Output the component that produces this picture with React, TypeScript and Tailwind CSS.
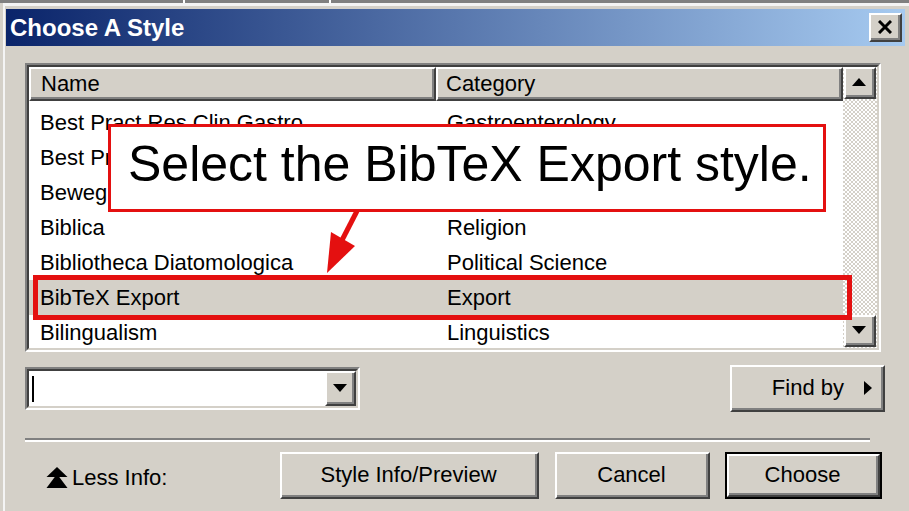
import React from "react";

const font = { fontFamily: '"Liberation Sans", Arial, sans-serif' };

function Bevel({ className = "", children }: { className?: string; children?: React.ReactNode }) {
  return (
    <div className={"border-t-2 border-l-2 border-t-white border-l-white border-b-2 border-r-2 border-b-[#404040] border-r-[#404040] " + className}>
      <div className="w-full h-full border-b-2 border-r-2 border-b-[#808080] border-r-[#808080] flex items-center justify-center">
        {children}
      </div>
    </div>
  );
}

function Sunken({ className = "", children }: { className?: string; children?: React.ReactNode }) {
  return (
    <div className={"border-t-2 border-l-2 border-t-[#808080] border-l-[#808080] border-b-2 border-r-2 border-b-white border-r-white " + className}>
      <div className="w-full h-full border-t-2 border-l-2 border-t-[#404040] border-l-[#404040] border-b-2 border-r-2 border-b-[#d4d0c8] border-r-[#d4d0c8] flex">
        {children}
      </div>
    </div>
  );
}

const rows: [string, string][] = [
  ["Best Pract Res Clin Gastro", "Gastroenterology"],
  ["Best Pract Res Clin Haem", "Hematology"],
  ["Bewegungstherapie", "Medicine"],
  ["Biblica", "Religion"],
  ["Bibliotheca Diatomologica", "Political Science"],
  ["BibTeX Export", "Export"],
  ["Bilingualism", "Linguistics"],
];

function Tri({ dir }: { dir: "up" | "down" | "right" }) {
  if (dir === "up")
    return (
      <svg width="14" height="8" viewBox="0 0 14 8"><polygon points="7,0 14,8 0,8" fill="#000" /></svg>
    );
  if (dir === "down")
    return (
      <svg width="14" height="8" viewBox="0 0 14 8"><polygon points="0,0 14,0 7,8" fill="#000" /></svg>
    );
  return (
    <svg width="8" height="14" viewBox="0 0 8 14"><polygon points="0,0 8,7 0,14" fill="#000" /></svg>
  );
}

export default function App() {
  return (
    <div className="w-[909px] h-[511px] bg-[#d4d0c8] flex flex-col overflow-hidden relative text-black" style={font}>
      {/* top strip */}
      <div className="h-[3px] flex bg-[#808080] shrink-0">
        <div className="w-[183px]" />
        <div className="w-[2px] bg-white" />
        <div className="w-[144px]" />
        <div className="w-[2px] bg-white" />
      </div>
      <div className="flex-1 ml-[3px] border-t-[3px] border-l-2 border-[#f4f4f4] border-r-0 border-b-0 flex flex-col">
        <div className="pt-[3px] pl-[1px] pr-[4px]">
          {/* title bar */}
          <div className="h-[37px] flex items-center justify-between bg-[linear-gradient(to_right,#0a246a,#a6caf0)] pl-[4px] pr-[3px]">
            <span className="text-white font-bold text-[24px] tracking-[0px]">Choose A Style</span>
            <Bevel className="w-[33px] h-[29px] bg-[#d4d0c8]">
              <svg width="14" height="14" viewBox="0 0 14 14">
                <path d="M1 1 L13 13 M13 1 L1 13" stroke="#000" strokeWidth="3" />
              </svg>
            </Bevel>
          </div>
        </div>
        <div className="pl-[20px] pt-[17px] flex flex-col">
          {/* list box */}
          <Sunken className="w-[856px] h-[289px]">
            <div className="flex-1 flex flex-col bg-white overflow-hidden">
              <div className="h-[34px] flex shrink-0">
                <Bevel className="w-[407px] h-full bg-[#d4d0c8]">
                  <div className="flex-1 pl-[10px] text-[22px]">Name</div>
                </Bevel>
                <Bevel className="w-[407px] h-full bg-[#d4d0c8]">
                  <div className="flex-1 pl-[8px] text-[22px]">Category</div>
                </Bevel>
              </div>
              <div className="flex flex-col pt-[4px]">
                {rows.map(([n, c], i) => (
                  <div key={n} className={"h-[35px] flex items-center text-[22px] shrink-0 " + (i === 5 ? "bg-[#d4d0c8]" : "")}>
                    <div className="w-[407px] pl-[11px] whitespace-nowrap overflow-hidden">{n}</div>
                    <div className="w-[407px] pl-[11px] whitespace-nowrap">{c}</div>
                  </div>
                ))}
              </div>
            </div>
            <div className="w-[34px] flex flex-col px-[1px] pb-[1px] bg-[repeating-conic-gradient(#d4d0c8_0%_25%,#ffffff_0%_50%)] [background-size:4px_4px]">
              <Bevel className="w-full h-[32px] bg-[#d4d0c8]"><Tri dir="up" /></Bevel>
              <div className="flex-1" />
              <Bevel className="w-full h-[32px] bg-[#d4d0c8]"><Tri dir="down" /></Bevel>
            </div>
          </Sunken>

          {/* combo + find by */}
          <div className="flex items-start mt-[13px]">
            <Sunken className="w-[335px] h-[43px] mt-[2px]">
              <div className="flex-1 bg-white flex items-center pl-[3px]">
                <div className="w-[2px] h-[26px] bg-black" />
              </div>
              <Bevel className="w-[31px] h-full bg-[#d4d0c8]"><Tri dir="down" /></Bevel>
            </Sunken>
            <Bevel className="ml-[370px] w-[155px] h-[47px] bg-[#d4d0c8]">
              <div className="flex-1 flex items-center justify-end pr-[9px] text-[22px]">
                <span className="mr-[20px]">Find by</span>
                <Tri dir="right" />
              </div>
            </Bevel>
          </div>

          {/* separator */}
          <div className="mt-[26px] w-[845px] flex flex-col">
            <div className="h-[2px] bg-[#808080]" />
            <div className="h-[2px] bg-white" />
          </div>

          {/* bottom buttons */}
          <div className="flex items-center mt-[10px] h-[47px]">
            <div className="flex items-center ml-[21px] w-[234px] text-[22px] pt-[4px]">
              <svg width="22" height="22" viewBox="0 0 22 22" className="mr-[4px]">
                <polygon points="11,0 21.5,10 0.5,10" fill="#000" />
                <polygon points="11,7 21.5,21 0.5,21" fill="#000" />
              </svg>
              <span>Less Info:</span>
            </div>
            <Bevel className="w-[259px] h-[47px] bg-[#d4d0c8]">
              <span className="text-[22px]">Style Info/Preview</span>
            </Bevel>
            <Bevel className="ml-[16px] w-[155px] h-[47px] bg-[#d4d0c8]">
              <span className="text-[22px]">Cancel</span>
            </Bevel>
            <div className="ml-[15px] w-[157px] h-[47px] border-2 border-black">
              <Bevel className="w-full h-full bg-[#d4d0c8]">
                <span className="text-[22px]">Choose</span>
              </Bevel>
            </div>
          </div>
        </div>
      </div>

      {/* annotation: highlight rectangle */}
      <div className="absolute left-[33px] top-[275px] w-[819px] h-[45px] border-[5px] border-[#e41010]" />
      {/* annotation: callout */}
      <div className="absolute left-[108px] top-[124px] w-[718px] h-[88px] border-[3px] border-[#e41010] bg-white pl-[17px] pt-[12px]">
        <div className="text-[50px] leading-none whitespace-nowrap" style={font}>Select the BibTeX Export style.</div>
      </div>
      {/* annotation: arrow */}
      <svg className="absolute left-0 top-0 pointer-events-none" width="909" height="511" viewBox="0 0 909 511">
        <line x1="357" y1="211" x2="339" y2="246" stroke="#e41010" strokeWidth="5" />
        <polygon points="327,273 331,232 355,246" fill="#e41010" />
      </svg>
    </div>
  );
}
